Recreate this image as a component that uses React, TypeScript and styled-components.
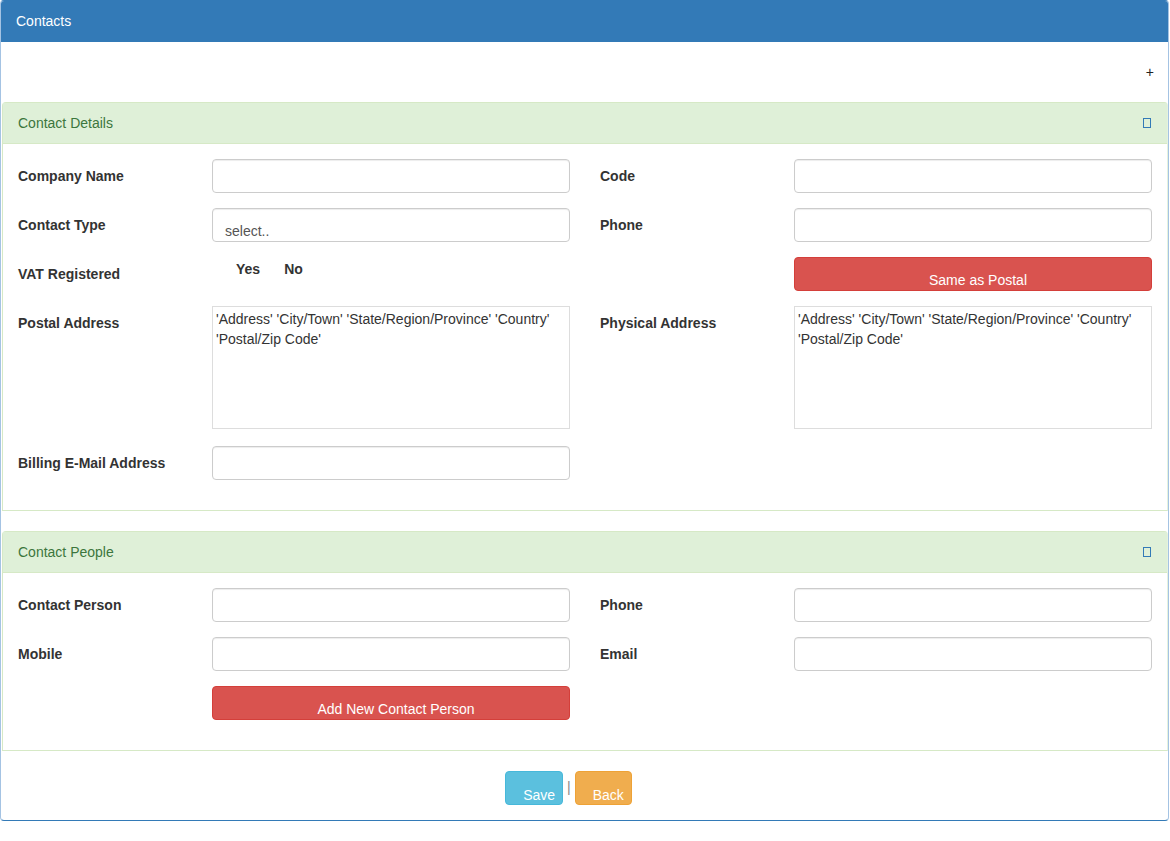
import React from 'react'
import styled, { createGlobalStyle } from 'styled-components'

const GlobalStyle = createGlobalStyle`
body {
  margin: 0;
  font-family: "Liberation Sans", Arial, Helvetica, sans-serif;
  font-size: 14px;
  line-height: 20px;
  color: #333;
  background: #fff;
}
* { box-sizing: border-box; }
`

const Panel = styled.div`
  width: 1169px;
  border: 1px solid #337ab7;
  border-left-color: #a4c3e3;
  border-right-color: #a4c3e3;
  border-radius: 4px;
  overflow: hidden;
`

const MainHeading = styled.div`
  background: #337ab7;
  color: #fff;
  padding: 10px 15px;
  border-bottom: 1px solid #337ab7;
`

const Toolbar = styled.div`
  height: 60px;
  display: flex;
  align-items: center;
  justify-content: flex-end;
  padding-right: 14px;
  color: #222;
`

const SubPanel = styled.div`
  margin: 0 0 20px 1px;
  border: 1px solid #d6e9c6;
  border-right-color: #e6f2de;
  border-radius: 4px 4px 0 0;
`

const SubHeading = styled.div`
  display: flex;
  justify-content: space-between;
  align-items: center;
  background: #dff0d8;
  color: #3c763d;
  padding: 10px 16px 10px 15px;
  border-bottom: 1px solid #d6e9c6;
`

const Toggle = styled.span`
  display: inline-block;
  width: 8px;
  height: 10px;
  border: 1px solid #337ab7;
`

const Body = styled.div`
  padding: 15px 0;
`

const Row = styled.div<{ $gap?: number }>`
  display: grid;
  grid-template-columns: 1fr 1fr;
  margin-bottom: ${p => p.$gap ?? 15}px;
`

const Field = styled.div`
  display: grid;
  grid-template-columns: 194px 1fr;
`

const Label = styled.label`
  padding: 7px 0 0 15px;
  font-weight: bold;
`

const Control = styled.div`
  padding: 0 15px;
`

const Input = styled.input`
  display: block;
  width: 100%;
  height: 34px;
  border: 1px solid #ccc;
  border-radius: 4px;
  box-shadow: inset 0 1px 1px rgba(0, 0, 0, 0.075);
  font: inherit;
  padding: 6px 12px;
`

const Select = styled.div`
  height: 34px;
  border: 1px solid #ccc;
  border-radius: 4px;
  padding: 12px 12px 0;
  color: #555;
  box-shadow: inset 0 1px 1px rgba(0, 0, 0, 0.075);
`

const Area = styled.div`
  height: 123px;
  border: 1px solid #ddd;
  padding: 2px 3px;
  color: #333;
  white-space: pre-line;
`

const Radios = styled.div`
  display: flex;
  gap: 24px;
  padding: 2px 0 0 24px;
  font-weight: bold;
`

const Button = styled.button<{ $bg: string; $line: string }>`
  display: block;
  height: 34px;
  border: 1px solid ${p => p.$line};
  border-radius: 4px;
  background: ${p => p.$bg};
  color: #fff;
  font: inherit;
  padding: 12px 7px 0 17px;
  text-align: center;
`

const WideButton = styled(Button)`
  width: 100%;
`

const Footer = styled.div`
  display: flex;
  justify-content: center;
  align-items: center;
  gap: 4px;
  padding: 0 32px 15px 0;
`

const SmallButton = styled(Button)`
  padding: 13px 7px 0 17px;
`

const Divider = styled.span`
  color: #888;
  margin-top: -2px;
`

const address = "'Address' 'City/Town' 'State/Region/Province' 'Country'\n'Postal/Zip Code'"

export default function App() {
  return <>
    <GlobalStyle />
    <Panel>
      <MainHeading>Contacts</MainHeading>
      <Toolbar>+</Toolbar>

      <SubPanel>
        <SubHeading>Contact Details<Toggle /></SubHeading>
        <Body>
          <Row>
            <Field><Label>Company Name</Label><Control><Input /></Control></Field>
            <Field><Label>Code</Label><Control><Input /></Control></Field>
          </Row>
          <Row>
            <Field><Label>Contact Type</Label><Control><Select>select..</Select></Control></Field>
            <Field><Label>Phone</Label><Control><Input /></Control></Field>
          </Row>
          <Row>
            <Field>
              <Label>VAT Registered</Label>
              <Control><Radios><span>Yes</span><span>No</span></Radios></Control>
            </Field>
            <Field>
              <Label />
              <Control><WideButton $bg="#d9534f" $line="#d43f3a">Same as Postal</WideButton></Control>
            </Field>
          </Row>
          <Row $gap={17}>
            <Field><Label>Postal Address</Label><Control><Area>{address}</Area></Control></Field>
            <Field><Label>Physical Address</Label><Control><Area>{address}</Area></Control></Field>
          </Row>
          <Row>
            <Field><Label>Billing E-Mail Address</Label><Control><Input /></Control></Field>
          </Row>
        </Body>
      </SubPanel>

      <SubPanel>
        <SubHeading>Contact People<Toggle /></SubHeading>
        <Body>
          <Row>
            <Field><Label>Contact Person</Label><Control><Input /></Control></Field>
            <Field><Label>Phone</Label><Control><Input /></Control></Field>
          </Row>
          <Row>
            <Field><Label>Mobile</Label><Control><Input /></Control></Field>
            <Field><Label>Email</Label><Control><Input /></Control></Field>
          </Row>
          <Row>
            <Field>
              <Label />
              <Control><WideButton $bg="#d9534f" $line="#d43f3a">Add New Contact Person</WideButton></Control>
            </Field>
          </Row>
        </Body>
      </SubPanel>

      <Footer>
        <SmallButton $bg="#5bc0de" $line="#46b8da">Save</SmallButton>
        <Divider>|</Divider>
        <SmallButton $bg="#f0ad4e" $line="#eea236">Back</SmallButton>
      </Footer>
    </Panel>
  </>
}
